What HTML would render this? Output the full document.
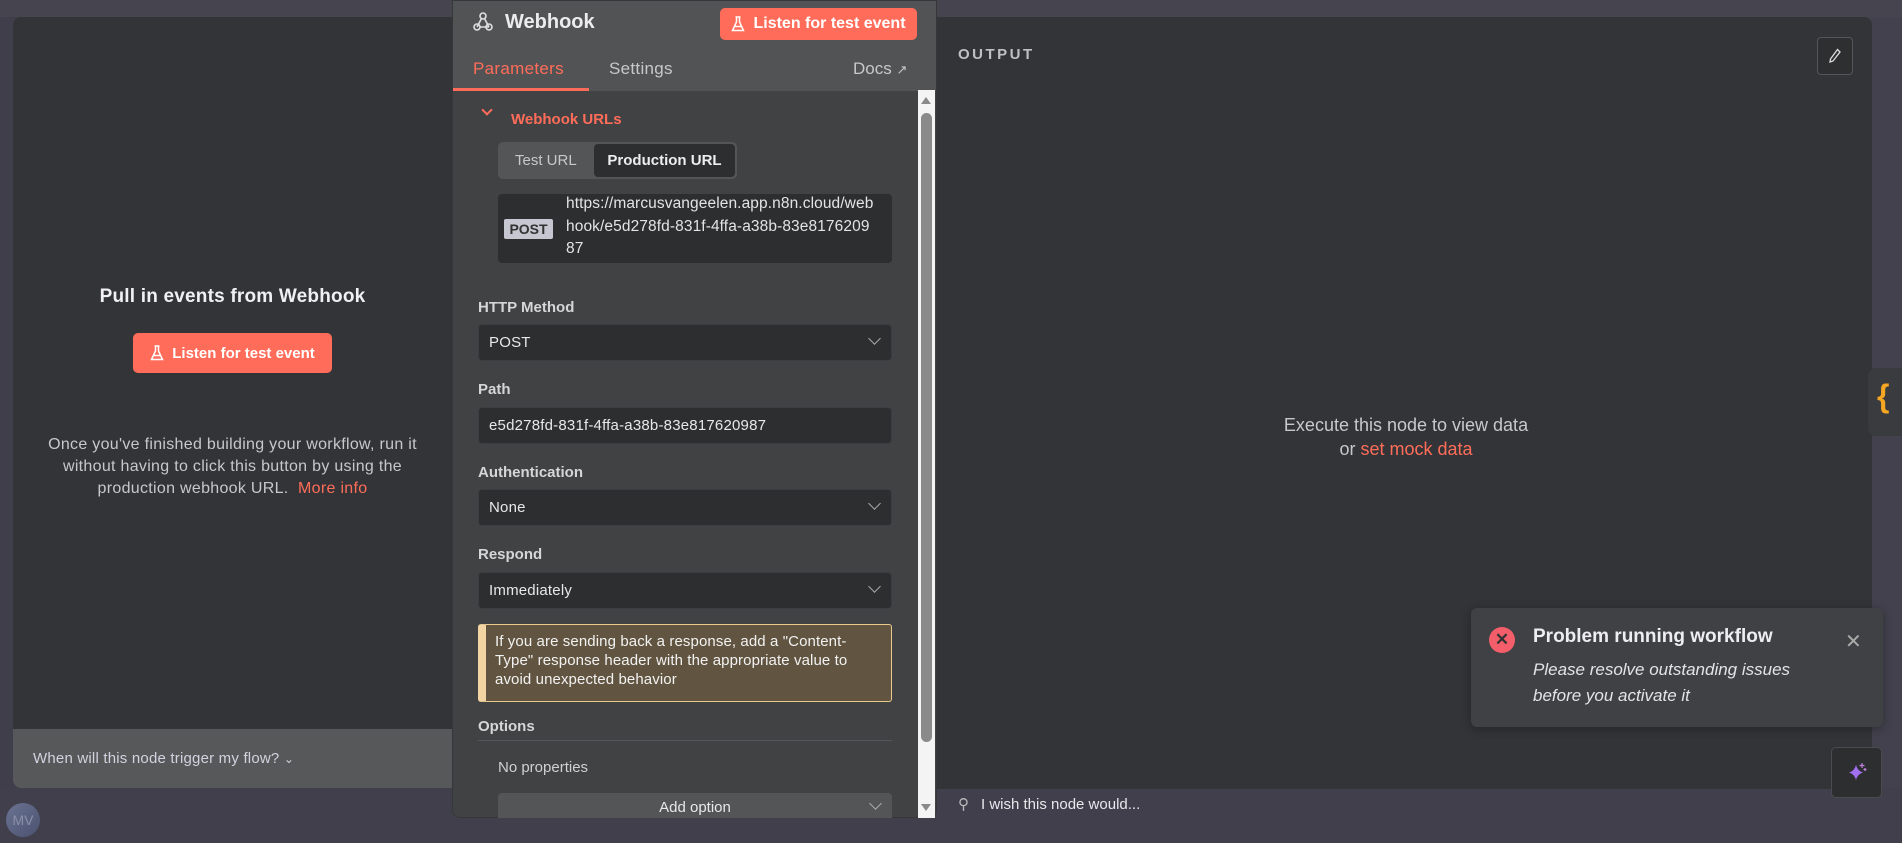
<!DOCTYPE html>
<html><head><meta charset="utf-8"><style>
*{box-sizing:border-box;margin:0;padding:0}
body{width:1902px;height:843px;overflow:hidden;background:#42414d;font-family:"Liberation Sans",sans-serif;position:relative;color:#e6e6e8}
.abs{position:absolute}
.lbl{position:absolute;left:478px;font-size:15px;font-weight:bold;color:#d6d6d8}
.sel{position:absolute;left:478px;width:414px;height:37px;background:#2d2e30;border:1px solid #3c3d40;border-radius:4px;font-size:15px;color:#e8e8ea;padding-left:10px;line-height:35px;letter-spacing:.2px}
.chev{position:absolute;right:12px;width:9px;height:9px;border-right:1.5px solid #aaa;border-bottom:1.5px solid #aaa;transform:rotate(45deg);top:9px}
.btn{position:absolute;background:#ff6d5a;border-radius:5px;color:#fff;font-weight:bold;font-size:15px;display:flex;align-items:center;justify-content:center;gap:8px}
</style></head><body>
<div class="abs" style="left:0;top:0;width:63px;height:843px;background:#3f3e4a"></div>
<div class="abs" style="left:0;top:0;width:1902px;height:17px;background:#46454f"></div>
<div class="abs" style="left:0;top:788px;width:1902px;height:55px;background:#413f4c"></div>
<div class="abs" style="left:6px;top:803px;width:34px;height:34px;border-radius:50%;background:linear-gradient(135deg,#6a7391,#4a5270);color:#8a90a8;font-size:14px;line-height:34px;text-align:center">MV</div>

<!-- left panel -->
<div class="abs" style="left:13px;top:17px;width:450px;height:771px;background:#333437;border-radius:8px;overflow:hidden">
  <div class="abs" style="left:0;top:712px;width:450px;height:59px;background:#57585a"></div>
  <div class="abs" style="left:20px;top:733px;font-size:15px;color:#d0d3e0;letter-spacing:.2px">When will this node trigger my flow? <span style="font-size:12px">&#8964;</span></div>
</div>
<div class="abs" style="left:13px;top:286px;width:439px;text-align:center;font-size:19px;font-weight:bold;color:#f0f0f2;letter-spacing:.2px">Pull in events from Webhook</div>
<div class="btn" style="left:133px;top:333px;width:199px;height:40px">
<svg width="14" height="16" viewBox="0 0 14 16" fill="none" stroke="#fff" stroke-width="1.5"><path d="M4.5 1h5M5.5 1v5L1.5 14.5h11L8.5 6V1M3.5 10.5h7"/></svg>Listen for test event</div>
<div class="abs" style="left:13px;top:434px;width:439px;text-align:center;font-size:16px;line-height:22px;color:#c8c8cc;letter-spacing:.3px">Once you've finished building your workflow, run it<br>without having to click this button by using the<br>production webhook URL.&nbsp; <span style="color:#ff6d5a">More info</span></div>

<!-- output panel -->
<div class="abs" style="left:930px;top:17px;width:942px;height:772px;background:#333437;border-radius:8px"></div>
<div class="abs" style="left:958px;top:46px;font-size:15px;font-weight:bold;letter-spacing:2.5px;color:#c0c0c4">OUTPUT</div>
<div class="abs" style="left:1817px;top:37px;width:36px;height:38px;border:1px solid #555659;border-radius:4px;background:#2e2f31"><svg width="34" height="36" viewBox="0 0 34 36" fill="none" stroke="#ddd" stroke-width="1.3"><path d="M19.5 11.5l2.5 2.5-7 9-3 1 .5-3z"/></svg></div>
<div class="abs" style="left:1206px;top:413px;width:400px;text-align:center;font-size:18px;line-height:24px;color:#c8c8cc">Execute this node to view data<br>or <span style="color:#ff6d5a">set mock data</span></div>
<div class="abs" style="left:1868px;top:368px;width:40px;height:68px;background:#3a3b3e;border-radius:8px;color:#f5a623;font-size:32px;font-weight:bold;padding:10px 0 0 9px">{</div>
<div class="abs" style="left:958px;top:795px;font-size:15px;color:#e8e8ea"><span style="color:#bbb;margin-right:12px">&#9906;</span>I wish this node would...</div>

<!-- middle panel -->
<div class="abs" style="left:452px;top:0;width:485px;height:818px;background:#414244;border-radius:0 0 8px 8px;overflow:hidden;border:1px solid #36373a">
  <div class="abs" style="left:0;top:0;width:485px;height:90px;background:#525355"></div>
  <div class="abs" style="left:0;top:87px;width:136px;height:3px;background:#ff6d5a"></div>
</div>
<svg class="abs" style="left:472px;top:11px" width="22" height="22" viewBox="0 0 22 22" fill="none" stroke="#e0e0e0" stroke-width="1.6"><circle cx="11" cy="5" r="3"/><circle cx="5" cy="16" r="3"/><circle cx="17" cy="16" r="3"/><path d="M9.5 7.5L5 16M8 16h9M12.5 7.5l4.5 8.5"/></svg>
<div class="abs" style="left:505px;top:11px;font-size:20px;font-weight:bold;color:#ececee">Webhook</div>
<div class="btn" style="left:720px;top:8px;width:197px;height:32px;font-size:16px">
<svg width="14" height="16" viewBox="0 0 14 16" fill="none" stroke="#fff" stroke-width="1.5"><path d="M4.5 1h5M5.5 1v5L1.5 14.5h11L8.5 6V1M3.5 10.5h7"/></svg>Listen for test event</div>
<div class="abs" style="left:473px;top:59px;font-size:17px;color:#ff6d5a;letter-spacing:.3px">Parameters</div>
<div class="abs" style="left:609px;top:59px;font-size:17px;color:#c8c8ca;letter-spacing:.3px">Settings</div>
<div class="abs" style="left:853px;top:59px;font-size:17px;color:#c8c8ca">Docs <span style="font-size:13px">&#8599;</span></div>

<div class="abs" style="left:483px;top:106px;width:8px;height:8px;border-right:2px solid #ff6d5a;border-bottom:2px solid #ff6d5a;transform:rotate(45deg)"></div>
<div class="abs" style="left:511px;top:111px;font-size:15px;font-weight:bold;color:#ff6d5a">Webhook URLs</div>
<div class="abs" style="left:498px;top:142px;width:239px;height:37px;background:#545557;border-radius:5px"></div>
<div class="abs" style="left:515px;top:152px;font-size:15px;color:#c8c8ca">Test URL</div>
<div class="abs" style="left:594px;top:144px;width:141px;height:33px;background:#2d2e30;border-radius:4px;font-size:15px;font-weight:bold;color:#eee;text-align:center;line-height:33px">Production URL</div>
<div class="abs" style="left:498px;top:194px;width:394px;height:69px;background:#2d2e30;border-radius:4px"></div>
<div class="abs" style="left:504px;top:219px;width:49px;height:20px;background:#c5c8d0;border-radius:2px;color:#333;font-size:14px;font-weight:bold;text-align:center;line-height:20px">POST</div>
<div class="abs" style="left:566px;top:193px;font-size:15.5px;line-height:22.5px;color:#e4e4e6;letter-spacing:.1px;white-space:nowrap">https://marcusvangeelen.app.n8n.cloud/web<br>hook/e5d278fd-831f-4ffa-a38b-83e8176209<br>87</div>

<div class="lbl" style="top:299px">HTTP Method</div>
<div class="sel" style="top:324px">POST<div class="chev"></div></div>
<div class="lbl" style="top:381px">Path</div>
<div class="sel" style="top:407px">e5d278fd-831f-4ffa-a38b-83e817620987</div>
<div class="lbl" style="top:464px">Authentication</div>
<div class="sel" style="top:489px">None<div class="chev"></div></div>
<div class="lbl" style="top:546px">Respond</div>
<div class="sel" style="top:572px">Immediately<div class="chev"></div></div>
<div class="abs" style="left:478px;top:624px;width:414px;height:78px;background:#615541;border:1px solid #e9c98e;border-left:8px solid #f2d5a3;border-radius:3px;padding:7px 0 0 9px;font-size:15px;line-height:19px;color:#f2f2f2;white-space:nowrap;letter-spacing:.1px">If you are sending back a response, add a "Content-<br>Type" response header with the appropriate value to<br>avoid unexpected behavior</div>
<div class="lbl" style="top:718px">Options</div>
<div class="abs" style="left:478px;top:740px;width:414px;height:1px;background:#55565a"></div>
<div class="abs" style="left:498px;top:759px;font-size:15px;color:#d0d0d2">No properties</div>
<div class="abs" style="left:498px;top:793px;width:394px;height:25px;background:#545557;border-radius:4px 4px 0 0;font-size:15px;color:#e8e8ea;text-align:center;line-height:30px">Add option<div class="chev" style="top:6px"></div></div>

<div class="abs" style="left:918px;top:90px;width:17px;height:728px;background:#f4f4f4"></div>
<div class="abs" style="left:921px;top:113px;width:11px;height:629px;background:#8a8a8a;border-radius:6px"></div>
<div class="abs" style="left:921px;top:97px;width:0;height:0;border-left:5.5px solid transparent;border-right:5.5px solid transparent;border-bottom:7px solid #8a8a8a"></div>
<div class="abs" style="left:921px;top:804px;width:0;height:0;border-left:5.5px solid transparent;border-right:5.5px solid transparent;border-top:7px solid #8a8a8a"></div>

<!-- toast -->
<div class="abs" style="left:1471px;top:608px;width:412px;height:119px;background:#404144;border-radius:6px;box-shadow:0 2px 10px rgba(0,0,0,.3)"></div>
<div class="abs" style="left:1489px;top:627px;width:26px;height:26px;border-radius:50%;background:#f45d6a;color:#333;font-weight:bold;font-size:17px;text-align:center;line-height:26px">✕</div>
<div class="abs" style="left:1533px;top:626px;font-size:19px;font-weight:bold;color:#eeeef0">Problem running workflow</div>
<div class="abs" style="left:1533px;top:657px;font-size:17px;font-style:italic;line-height:26px;color:#e4e4e6">Please resolve outstanding issues<br>before you activate it</div>
<div class="abs" style="left:1845px;top:629px;font-size:20px;color:#aaa">✕</div>
<div class="abs" style="left:1831px;top:747px;width:51px;height:51px;background:#2d2e30;border:1px solid #4a4b4e;border-radius:5px"><svg width="49" height="49" viewBox="0 0 49 49"><path d="M24 17q1.5 6 7 7.5q-5.5 1.5-7 7.5q-1.5-6-7-7.5q5.5-1.5 7-7.5z" fill="#a070f0"/><path d="M30 15v5M27.5 17.5h5M33 20v3M31.5 21.5h3" stroke="#c080e0" stroke-width="1.2"/></svg></div>
</body></html>
